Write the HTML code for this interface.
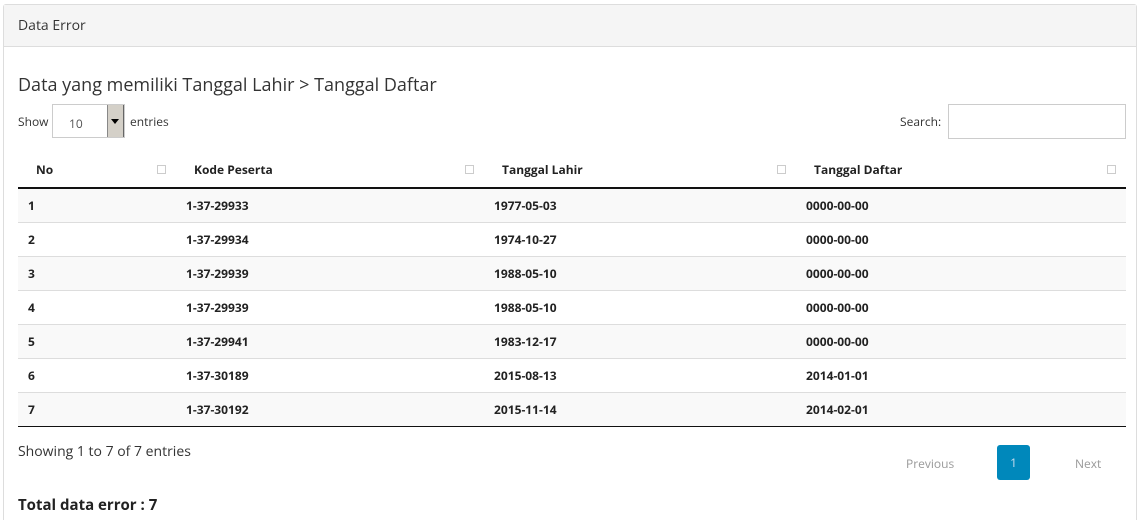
<!DOCTYPE html>
<html><head><style>
html,body{margin:0;background:#fff;width:1143px;height:520px;overflow:hidden}
body{font-family:"Open Sans","Liberation Sans",sans-serif;color:#333;position:relative}
.panel{position:absolute;left:3px;top:4px;width:1134px;height:516px;border:1px solid #ddd;border-bottom:none;border-radius:3px 3px 0 0;box-sizing:border-box}
.ph{height:41px;background:#f5f5f5;border-bottom:1px solid #ddd;font-size:14px;line-height:42px;padding-left:14px}
.a{position:absolute}
h3{position:absolute;left:18px;top:73px;margin:0;font-weight:normal;font-size:18px;color:#333}
.sel{position:absolute;left:52px;top:104px;width:73px;height:34px;border:1px solid #ccc;box-sizing:border-box;font-size:12px}
.sel span{position:absolute;left:16px;top:10px;color:#555}
.sel i{position:absolute;right:0;top:0;width:15px;height:32px;background:#d4d0c8;border-left:1px solid #888;border-right:1px solid #666}
.sel i:after{content:"";position:absolute;left:3px;top:14px;border:4px solid transparent;border-top:5px solid #000}
.srch{position:absolute;left:948px;top:104px;width:178px;height:35px;border:1px solid #ccc;box-sizing:border-box}
table{position:absolute;left:18px;top:152px;width:1108px;border-collapse:collapse;font-size:12px;font-weight:bold;color:#222;table-layout:fixed}
th{height:35px;text-align:left;border-bottom:2px solid #111;position:relative;padding:0 0 0 18px}
th b{position:absolute;right:10px;top:13px;width:9px;height:9px;border:1px solid #ccc;box-sizing:border-box}
td{height:33px;border-top:1px solid #ddd;padding:0 0 0 10px}
tr.o td{background:#f9f9f9}
tr:last-child td{border-bottom:1px solid #111}
</style></head><body>
<div class="panel"><div class="ph">Data Error</div></div>
<h3>Data yang memiliki Tanggal Lahir &gt; Tanggal Daftar</h3>
<div class="a" style="left:18px;top:113px;font-size:12px">Show</div>
<div class="sel"><span>10</span><i></i></div>
<div class="a" style="left:130px;top:113px;font-size:12px">entries</div>
<div class="a" style="left:900px;top:113px;font-size:12px">Search:</div>
<div class="srch"></div>
<table>
<colgroup><col style="width:158px"><col style="width:308px"><col style="width:312px"><col></colgroup>
<tr><th>No<b></b></th><th>Kode Peserta<b></b></th><th>Tanggal Lahir<b></b></th><th>Tanggal Daftar<b></b></th></tr>
<tr class="o"><td>1</td><td>1-37-29933</td><td>1977-05-03</td><td>0000-00-00</td></tr>
<tr><td>2</td><td>1-37-29934</td><td>1974-10-27</td><td>0000-00-00</td></tr>
<tr class="o"><td>3</td><td>1-37-29939</td><td>1988-05-10</td><td>0000-00-00</td></tr>
<tr><td>4</td><td>1-37-29939</td><td>1988-05-10</td><td>0000-00-00</td></tr>
<tr class="o"><td>5</td><td>1-37-29941</td><td>1983-12-17</td><td>0000-00-00</td></tr>
<tr><td>6</td><td>1-37-30189</td><td>2015-08-13</td><td>2014-01-01</td></tr>
<tr class="o"><td>7</td><td>1-37-30192</td><td>2015-11-14</td><td>2014-02-01</td></tr>
</table>
<div class="a" style="left:18px;top:442px;font-size:14px">Showing 1 to 7 of 7 entries</div>
<div class="a" style="left:906px;top:455px;font-size:12px;color:#999">Previous</div>
<div class="a" style="left:997px;top:445px;width:33px;height:35px;background:#0088bb;border-radius:3px;color:#cde;font-size:12px;text-align:center;line-height:35px">1</div>
<div class="a" style="left:1075px;top:455px;font-size:12px;color:#999">Next</div>
<div class="a" style="left:18px;top:495px;font-size:15px;font-weight:bold;color:#222">Total data error : 7</div>
</body></html>
